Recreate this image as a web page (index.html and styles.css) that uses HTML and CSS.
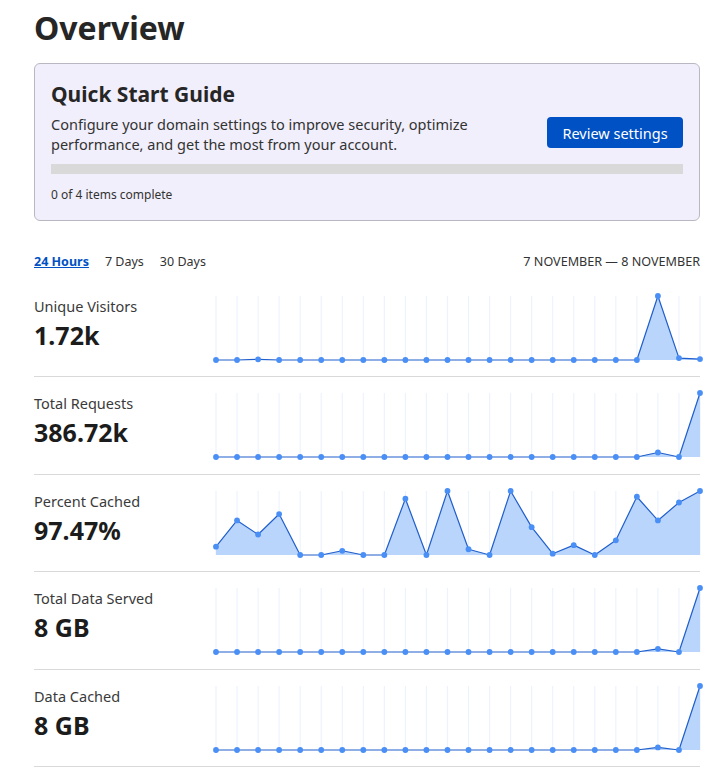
FILE: index.html
```html
<!DOCTYPE html>
<html lang="en">
<head>
    <meta charset="UTF-8">
    <meta name="viewport" content="width=device-width, initial-scale=1.0">
    <title>Overview</title>
    <link rel="stylesheet" href="styles.css">
</head>
<body>

    <main class="page">
        <h1 class="title">Overview</h1>

        <section class="guide">
            <div class="guide-top">
                <div class="guide-text">
                    <h2 class="guide-title">Quick Start Guide</h2>
                    <p class="guide-desc">Configure your domain settings to improve security, optimize performance, and get the most from your account.</p>
                </div>
                <button class="guide-btn">Review settings</button>
            </div>
            <div class="progress"><div class="progress-fill" style="width: 0%;"></div></div>
            <p class="guide-count">0 of 4 items complete</p>
        </section>

        <div class="range">
            <nav class="tabs">
                <a href="#" class="tab active">24 Hours</a>
                <a href="#" class="tab">7 Days</a>
                <a href="#" class="tab">30 Days</a>
            </nav>
            <span class="dates">7 NOVEMBER — 8 NOVEMBER</span>
        </div>

        <div class="stats" id="stats"></div>
    </main>

    <script>
        // Dados de cada métrica (valores normalizados 0..1)
        const stats = [
            { label: "Unique Visitors", value: "1.72k",
              data: [0,0,0.01,0,0,0,0,0,0,0,0,0,0,0,0,0,0,0,0,0,0,1,0.03,0.015] },
            { label: "Total Requests", value: "386.72k",
              data: [0,0,0,0,0,0,0,0,0,0,0,0,0,0,0,0,0,0,0,0,0,0.07,0,1] },
            { label: "Percent Cached", value: "97.47%",
              data: [0.13,0.54,0.32,0.64,0,0,0.066,0,0,0.88,0,1,0.09,0,1,0.435,0.02,0.154,0,0.23,0.91,0.54,0.82,1] },
            { label: "Total Data Served", value: "8 GB",
              data: [0,0,0,0,0,0,0,0,0,0,0,0,0,0,0,0,0,0,0,0,0,0.05,0,1] },
            { label: "Data Cached", value: "8 GB",
              data: [0,0,0,0,0,0,0,0,0,0,0,0,0,0,0,0,0,0,0,0,0,0.04,0,1] }
        ];

        const W = 484, H = 64;

        function sparkline(data) {
            const step = W / (data.length - 1);
            const pts = data.map((v, i) => [+(i * step).toFixed(2), +(H - v * H).toFixed(2)]);
            let grid = "";
            pts.forEach(p => {
                grid += `<line class="grid" x1="${p[0]}" y1="0" x2="${p[0]}" y2="${H}"/>`;
            });
            const line = pts.map(p => p.join(",")).join(" ");
            const area = `0,${H} ${line} ${W},${H}`;
            let dots = "";
            pts.forEach(p => {
                dots += `<circle class="dot" cx="${p[0]}" cy="${p[1]}" r="2.9"/>`;
            });
            return `<svg class="spark" width="${W}" height="${H}" viewBox="0 0 ${W} ${H}">
                ${grid}
                <polygon class="area" points="${area}"/>
                <polyline class="line" points="${line}"/>
                ${dots}
            </svg>`;
        }

        document.getElementById("stats").innerHTML = stats.map(s => `
            <div class="stat">
                <div class="stat-info">
                    <div class="stat-label">${s.label}</div>
                    <div class="stat-value">${s.value}</div>
                </div>
                ${sparkline(s.data)}
            </div>
        `).join("");
    </script>

</body>
</html>
```

FILE: styles.css
```css
body {
    margin: 0;
    font-family: 'Noto Sans', 'Open Sans', sans-serif;
    color: #222;
    background: #fff;
}

.page {
    padding: 0 18px 0 34px;
}

.title {
    margin: 0;
    padding-top: 5px;
    font-size: 32px;
    line-height: 45px;
    font-weight: 700;
    color: #262626;
}

.guide {
    margin-top: 13px;
    background-color: #f1effb;
    border: 1px solid #b9b8c2;
    border-radius: 6px;
    padding: 15px 16px 16px 16px;
}

.guide-top {
    display: flex;
    justify-content: space-between;
    align-items: flex-start;
}

.guide-text {
    width: 440px;
}

.guide-title {
    margin: 0;
    font-size: 21px;
    line-height: 30px;
    font-weight: 700;
    color: #262626;
}

.guide-desc {
    margin: 5px 0 0;
    font-size: 14.5px;
    line-height: 20px;
    color: #333;
}

.guide-btn {
    margin-top: 38px;
    width: 136px;
    height: 31px;
    background-color: #0051c3;
    color: white;
    border: none;
    border-radius: 4px;
    font-family: inherit;
    font-size: 14.5px;
    cursor: pointer;
}

.progress {
    margin-top: 10px;
    height: 10px;
    background-color: #d9d9d9;
}

.progress-fill {
    height: 100%;
    background-color: #0051c3;
}

.guide-count {
    margin: 12px 0 0;
    font-size: 12px;
    line-height: 18px;
    color: #333;
}

.range {
    display: flex;
    justify-content: space-between;
    align-items: center;
    margin-top: 29px;
    height: 22px;
}

.tabs {
    display: flex;
    gap: 16px;
}

.tab {
    font-size: 12.5px;
    color: #333;
    text-decoration: none;
}

.tab.active {
    font-weight: 700;
    color: #0051c3;
    text-decoration: underline;
}

.dates {
    font-size: 12.6px;
    color: #333;
}

.stats {
    margin-top: 8px;
}

.stat {
    display: flex;
    height: 97px;
    border-bottom: 1px solid #d9d9d9;
    box-sizing: border-box;
}

.stat + .stat {
    height: 97.5px;
}

.stat-info {
    width: 182px;
    padding-top: 16px;
}

.stat-label {
    font-size: 14.5px;
    line-height: 20px;
    color: #3a3a3a;
}

.stat-value {
    margin-top: 2px;
    font-size: 25px;
    line-height: 34px;
    font-weight: 700;
    color: #1c1c1c;
}

.spark {
    margin-top: 16px;
    overflow: visible;
}

.spark .grid {
    stroke: #edf3fd;
    stroke-width: 1.2;
}

.spark .area {
    fill: #b9d5fb;
}

.spark .line {
    fill: none;
    stroke: #1f5ecc;
    stroke-width: 1.2;
    stroke-linejoin: round;
}

.spark .dot {
    fill: #4a8ff5;
}
```
